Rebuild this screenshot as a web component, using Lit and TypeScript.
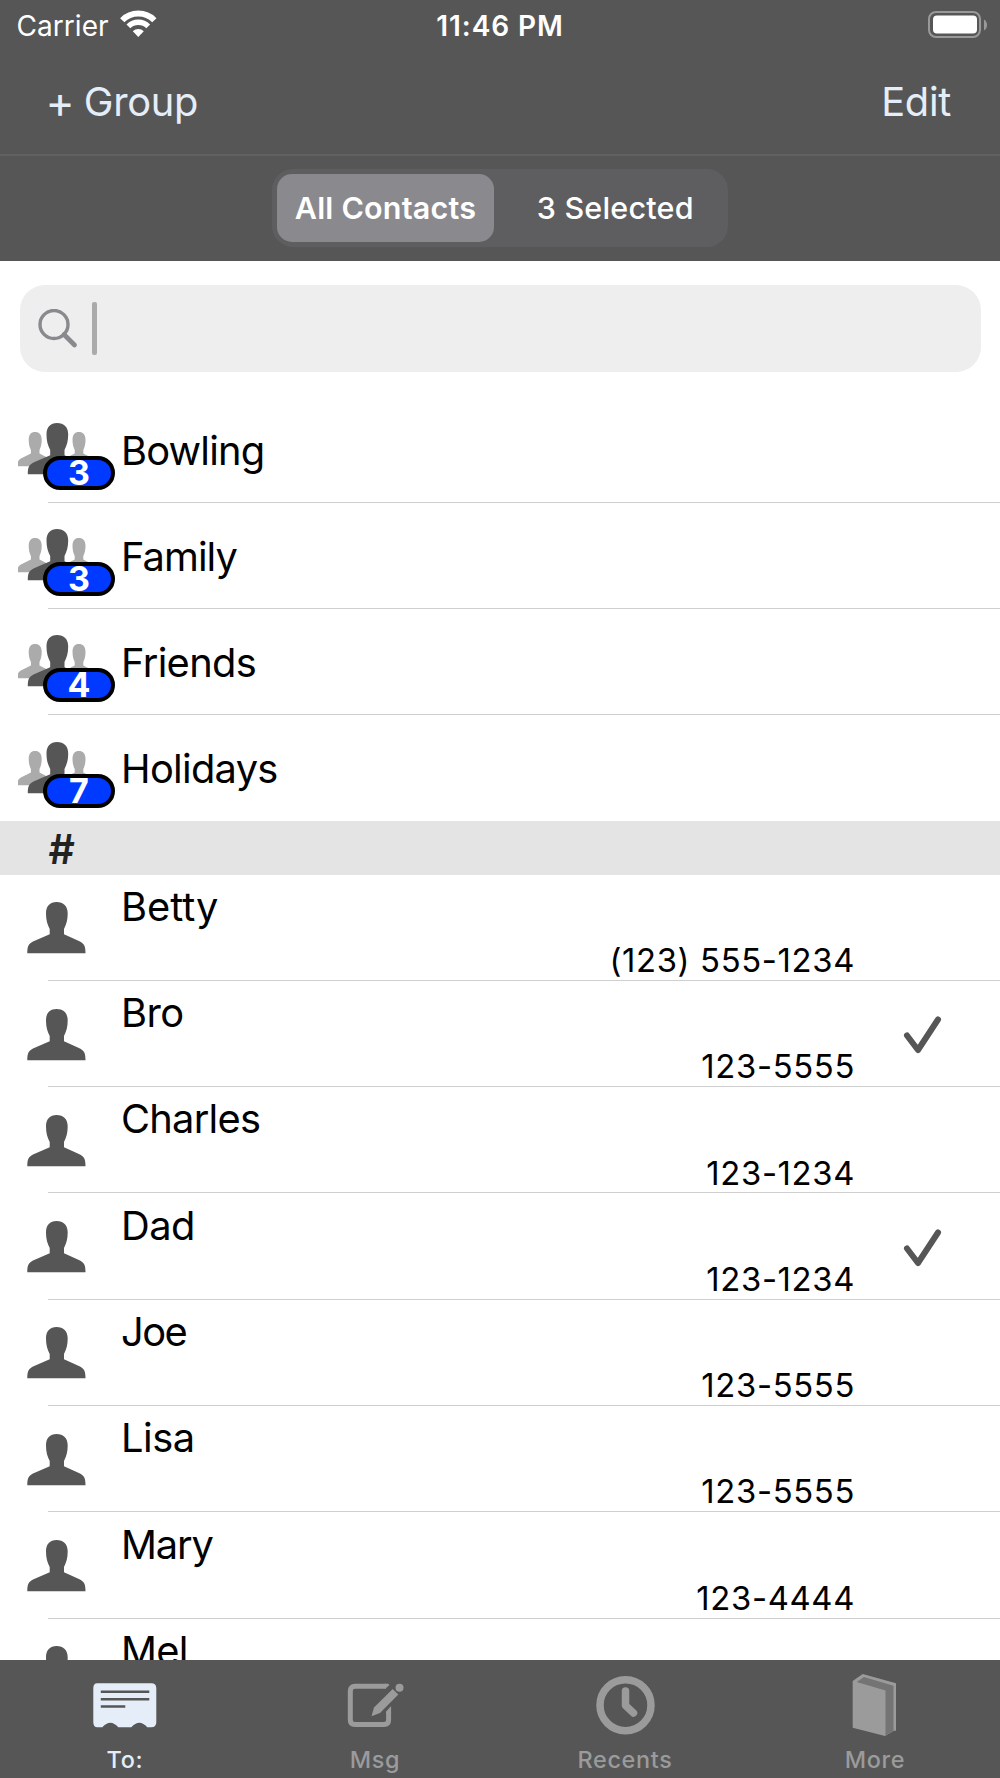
import { LitElement, html, css, svg, nothing } from "lit";
import { customElement, property } from "lit/decorators.js";
import { styleMap } from "lit/directives/style-map.js";

interface Group { name: string; count: number; tracking: number; }
interface Contact { name: string; phone: string; selected?: boolean; tracking?: number; }

const GROUPS: Group[] = [
  { name: "Bowling", count: 3, tracking: -0.8 },
  { name: "Family", count: 3, tracking: -0.95 },
  { name: "Friends", count: 4, tracking: -0.65 },
  { name: "Holidays", count: 7, tracking: -0.7 },
];

const CONTACTS: Contact[] = [
  { name: "Betty", phone: "(123) 555-1234", tracking: 0 },
  { name: "Bro", phone: "123-5555", selected: true },
  { name: "Charles", phone: "123-1234", tracking: -0.75 },
  { name: "Dad", phone: "123-1234", selected: true },
  { name: "Joe", phone: "123-5555", tracking: -1.5 },
  { name: "Lisa", phone: "123-5555" },
  { name: "Mary", phone: "123-4444", tracking: -1.1 },
  { name: "Mel", phone: "", tracking: -0.7 },
];

const PERSON =
  "M29.500 0C36.500 0 40.700 4 40.700 11.500C40.700 18 39.300 22.500 37 27V32.200L53 39.500C57.500 42 58.500 44.500 58.500 51.300H.3C.3 44.500 1.300 42 6 39.500L22.700 32.200V27C20.300 22.500 19 18 19 11.500C19 4 23 0 29.500 0Z";

const personIcon = html`<svg class="person" width="59" height="52" viewBox="0 0 59 52"><path d=${PERSON} fill="#565656" /></svg>`;

const groupIcon = html`<svg width="80" height="52" viewBox="0 0 80 52">
  <path d=${PERSON} fill="#ababab" transform="translate(-.7 9) scale(.6 .67)" />
  <path d=${PERSON} fill="#ababab" transform="translate(43.100 9) scale(.6 .67)" />
  <path d=${PERSON} fill="#565656" transform="translate(9.500 0)" />
</svg>`;

@customElement("status-bar")
export class StatusBar extends LitElement {
  static styles = css`
    :host { display: grid; grid-template-columns: 1fr auto 1fr; align-items: center; height: 51px; padding: 0 12px; color: #fff; font-size: 28px; }
    .carrier { display: flex; align-items: center; gap: 11px; padding-left: 4.500px; letter-spacing: 0.050px; }
    .wifi { margin-top: -4px; }
    .time { font-weight: 600; letter-spacing: 0.900px; }
    .battery { justify-self: end; margin-top: -1px; }
    svg { display: block; }
  `;
  render() {
    return html`
      <div class="carrier"><span>Carrier</span>
        <svg class="wifi" width="38" height="28" viewBox="0 0 38 28" fill="none" stroke="#fff">
          <path d="M2.250 10.250A22.700 22.700 0 0 1 34.350 10.250" stroke-width="6" />
          <path d="M8.400 16.400A14 14 0 0 1 28.200 16.400" stroke-width="5.400" />
          <path d="M18.300 27L12.800 21.300A7.700 7.700 0 0 1 23.800 21.300Z" fill="#fff" stroke="none" />
        </svg>
      </div>
      <div class="time">11:46 PM</div>
      <svg class="battery" width="60" height="28" viewBox="0 0 60 28">
        <rect x="1" y="1" width="51" height="25" rx="7" fill="none" stroke="#999" stroke-width="2" />
        <rect x="5" y="4.500" width="44" height="18" rx="4" fill="#fff" />
        <path d="M56 8.500Q59 10.500 59 14T56 19.500Z" fill="#999" />
      </svg>`;
  }
}

@customElement("contact-row")
export class ContactRow extends LitElement {
  @property({ attribute: false }) contact!: Contact;
  static styles = css`
    :host { display: grid; grid-template-columns: 94px 734px 1fr; height: 106.280px; padding-left: 27px; box-sizing: border-box;
      background: linear-gradient(#cfcfcf, #cfcfcf) 48px 100% / 100% 1px no-repeat; }
    .person { display: block; margin-top: 27.700px; }
    .text { display: flex; flex-direction: column; justify-content: space-between; padding: 10.300px 0 0.800px; }
    .name { font-size: 39.800px; line-height: 44px; }
    .phone { align-self: flex-end; font-size: 32.800px; line-height: 40px; letter-spacing: 0.650px; }
    .check { display: block; margin: 33.300px 0 0 47.500px; }
  `;
  render() {
    const c = this.contact;
    return html`${personIcon}
      <div class="text">
        <div class="name" style=${styleMap({ letterSpacing: `${c.tracking ?? -0.5}px` })}>${c.name}</div>
        <div class="phone">${c.phone}</div>
      </div>
      ${c.selected
        ? html`<svg class="check" width="40" height="40" viewBox="0 0 40 40"><path d="M4 21.500L15 36L35 5.500" fill="none" stroke="#565656" stroke-width="6" stroke-linecap="round" stroke-linejoin="round" /></svg>`
        : nothing}`;
  }
}

@customElement("group-row")
export class GroupRow extends LitElement {
  @property({ attribute: false }) group!: Group;
  @property({ type: Boolean, reflect: true }) last = false;
  static styles = css`
    :host { display: flex; height: 106.280px; padding-left: 18px; box-sizing: border-box;
      background: linear-gradient(#cfcfcf, #cfcfcf) 48px 100% / 100% 1px no-repeat; }
    :host([last]) { background: none; }
    .icon { position: relative; width: 103px; }
    .icon svg { display: block; margin-top: 26.500px; }
    .badge { position: absolute; left: 25px; top: 59.300px; box-sizing: border-box; width: 72px; height: 34px; border: 4.500px solid #000; border-radius: 17px;
      background: #0039ff; color: #fff; text-align: center; font-size: 34px; font-weight: 700; line-height: 25px; }
    .name { font-size: 39.800px; line-height: 44px; margin-top: 32.300px; }
  `;
  render() {
    const g = this.group;
    return html`<div class="icon">${groupIcon}<div class="badge">${g.count}</div></div>
      <div class="name" style=${styleMap({ letterSpacing: `${g.tracking}px` })}>${g.name}</div>`;
  }
}

const noteIcon = svg`<path d="M5 1H59Q64 1 64 6V40Q64 45 59 45H55Q47 36 39 45H26Q18 36 10 45H5Q1 45 1 40V6Q1 1 5 1Z" fill="#e5eef8" />
  <path d="M8.500 9.500H57M8.500 17H57M8.500 24.200H33" stroke="#565656" stroke-width="2.500" />`;

@customElement("tab-bar")
export class TabBar extends LitElement {
  static styles = css`
    :host { display: grid; grid-template-columns: repeat(4, 1fr); flex: none; height: 118.500px; background: #565656; color: #9b9b9b; }
    .tab { display: flex; flex-direction: column; align-items: center; font-size: 23.400px; font-weight: 500; line-height: 28px; letter-spacing: 0.700px; }
    .active { color: #e5eef8; }
    svg { display: block; margin: 12.500px 0 10px; }
  `;
  private tab(label: string, icon: unknown, active = false) {
    return html`<div class="tab ${active ? "active" : ""}"><svg width="64" height="64" viewBox="0 0 64 64">${icon}</svg>${label}</div>`;
  }
  render() {
    return html`
      ${this.tab("To:", svg`<g transform="translate(-.7 10.300)">${noteIcon}</g>`, true)}
      ${this.tab("Msg", svg`
        <path d="M43 14.200H12Q7.300 14.200 7.300 19V48Q7.300 52.500 12 52.500H41Q45.600 52.500 45.600 48V40" fill="none" stroke="#9b9b9b" stroke-width="5" />
        <path d="M42 11.700H45L46.500 13L42 17ZM43.100 39.500L48.100 34V41H43.100Z" fill="#9b9b9b" />
        <path d="M28.500 44.200L31 35.500L49.700 17L55.300 22.500L37 41Z" fill="#9b9b9b" /><circle cx="56.500" cy="15.700" r="4" fill="#9b9b9b" />`)}
      ${this.tab("Recents", svg`<g fill="none" stroke="#9b9b9b" stroke-width="7.500">
        <circle cx="32.500" cy="33.200" r="25.500" /><path d="M32.500 19V33.500L40.500 41" stroke-linecap="round" stroke-linejoin="round" /></g>`)}
      ${this.tab("More", svg`<path d="M9.700 9L19.700 2L53 11.300V58.700H51L42 64L9.700 55.700Z" fill="#9b9b9b" />
        <path d="M13.700 10L21 5L50.500 13.700V59L42.500 63.500V18.500Z" fill="#747474" />`)}`;
  }
}

@customElement("app-root")
export class AppRoot extends LitElement {
  static styles = css`
    :host { display: flex; flex-direction: column; width: 1000px; height: 1778px; overflow: hidden; background: #fff; color: #000; font-family: Inter, "Liberation Sans", sans-serif; }
    .header { flex: none; height: 261px; background: #565656; }
    .nav { display: flex; justify-content: space-between; box-sizing: border-box; height: 105px; padding: 26px 49px 0 45.500px; border-bottom: 2px solid #616161; color: #e5eef8; font-size: 39.800px; line-height: 50px; letter-spacing: -0.300px; }
    .add { display: flex; gap: 9.500px; }
    .plus { font-size: 44px; }
    .segments { display: flex; box-sizing: border-box; width: 456px; height: 78px; margin: 13px auto 0; padding: 5px; border-radius: 21px; background: #5e5e60; color: #fff; font-size: 30.500px; font-weight: 500; line-height: 68px; text-align: center; letter-spacing: 0.200px; }
    .segment { flex: 1; padding-left: 13.500px; }
    .chosen { flex: 0 0 217px; padding: 0; border-radius: 15px; background: #8a898e; font-weight: 600; }
    .search { flex: none; display: flex; align-items: center; gap: 13.500px; box-sizing: border-box; height: 87px; margin: 24px 19.500px 24.400px; padding-left: 18.500px; border-radius: 25px; background: #eee; }
    .caret { width: 5px; height: 53px; margin-top: -1px; border-radius: 2px; background: #aaa; }
    .list { flex: 1; min-height: 0; overflow: hidden; }
    .section { height: 53.200px; box-sizing: border-box; padding: 3.500px 0 0 48.500px; background: #e4e4e4; color: #222; font-size: 41px; font-weight: 600; line-height: 48px; }
  `;
  render() {
    return html`
      <div class="header">
        <status-bar></status-bar>
        <div class="nav"><div class="add"><span class="plus">+</span><span>Group</span></div><span>Edit</span></div>
        <div class="segments"><div class="segment chosen">All Contacts</div><div class="segment">3 Selected</div></div>
      </div>
      <div class="search">
        <svg width="40" height="40" viewBox="0 0 40 40" fill="none" stroke="#8a8a8e">
          <circle cx="16" cy="15.500" r="14" stroke-width="3.400" /><path d="M26 25.500L36.500 36" stroke-width="4.700" stroke-linecap="round" />
        </svg>
        <div class="caret"></div>
      </div>
      <div class="list">
        ${GROUPS.map((g, i) => html`<group-row .group=${g} ?last=${i === GROUPS.length - 1}></group-row>`)}
        <div class="section">#</div>
        ${CONTACTS.map((c) => html`<contact-row .contact=${c}></contact-row>`)}
      </div>
      <tab-bar></tab-bar>`;
  }
}
